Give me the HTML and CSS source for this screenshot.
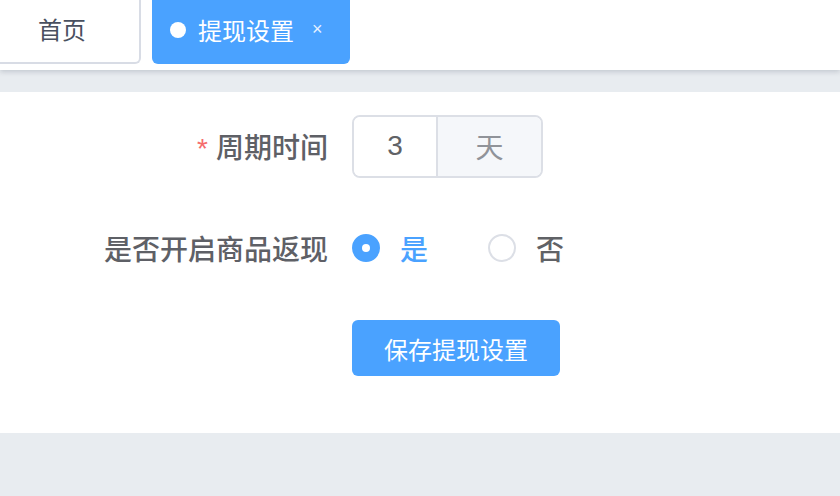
FILE: index.html
```html
<!DOCTYPE html>
<html>
<head>
<meta charset="utf-8">
<link rel="stylesheet" href="styles.css">
<title>提现设置</title>
</head>
<body>
  <div class="tags_view">
    <span class="tag_item tag_home">首页</span>
    <span class="tag_item tag_active"><i class="tag_dot"></i>提现设置<span class="tag_close">×</span></span>
  </div>

  <div class="app_main">
    <form class="set_form" action="">
      <div class="form_item item_period">
        <label class="form_label"><span class="required">*</span>周期时间</label>
        <div class="form_content">
          <div class="input_group">
            <input class="input_inner" type="text" value="3">
            <div class="input_append">天</div>
          </div>
        </div>
      </div>

      <div class="form_item item_radio">
        <label class="form_label">是否开启商品返现</label>
        <div class="form_content">
          <label class="radio radio_checked"><span class="radio_circle"></span><span class="radio_text">是</span></label>
          <label class="radio"><span class="radio_circle"></span><span class="radio_text">否</span></label>
        </div>
      </div>

      <div class="form_item item_button">
        <div class="form_label"></div>
        <div class="form_content">
          <button type="button" class="button_primary">保存提现设置</button>
        </div>
      </div>
    </form>
  </div>
</body>
</html>
```

FILE: styles.css
```css
body {
  margin: 0;
  background-color: #e8ecf0;
  font-family: "Liberation Sans", "Noto Sans CJK SC", sans-serif;
  color: #606266;
}

/* tab bar */
.tags_view {
  height: 70px;
  background-color: #fff;
  box-shadow: 0 2px 5px rgba(0, 21, 41, 0.16);
  display: flex;
  align-items: flex-start;
  gap: 11px;
}

.tag_item {
  box-sizing: border-box;
  height: 64px;
  padding-bottom: 5px;
  display: flex;
  align-items: center;
  font-size: 24px;
  border-radius: 0 0 6px 6px;
}

.tag_home {
  margin-left: -20px;
  padding-left: 56px;
  padding-right: 53px;
  border: 2px solid #d8dce5;
  border-top: none;
  color: #495060;
}

.tag_active {
  padding-left: 18px;
  padding-right: 22px;
  width: 198px;
  background-color: #4aa2ff;
  color: #fff;
}

.tag_dot {
  width: 16px;
  height: 16px;
  border-radius: 50%;
  background-color: #fff;
  margin-right: 12px;
}

.tag_close {
  font-size: 18px;
  margin-left: 18px;
  color: #e6f1ff;
}

/* content card */
.app_main {
  margin-top: 22px;
  background-color: #fff;
  height: 341px;
  box-sizing: border-box;
  padding-top: 22px;
}

.form_item {
  display: flex;
  align-items: center;
}

.item_period {
  height: 64px;
  margin-bottom: 44px;
}

.item_radio {
  height: 52px;
  margin-bottom: 46px;
}

.item_button {
  height: 56px;
}

.form_label {
  box-sizing: border-box;
  width: 352px;
  padding-right: 24px;
  text-align: right;
  font-size: 28px;
  font-weight: 500;
  color: #5e6066;
}

.required {
  color: #f56c6c;
  font-size: 28px;
  margin-right: 8px;
}

.form_content {
  display: flex;
  align-items: center;
}

/* input with append */
.input_group {
  display: flex;
  box-sizing: border-box;
  width: 191px;
  height: 63px;
  border: 2px solid #dcdfe6;
  border-radius: 8px;
  overflow: hidden;
}

.input_inner {
  width: 82px;
  border: none;
  outline: none;
  padding: 0;
  text-align: center;
  font-family: "Liberation Sans", sans-serif;
  font-size: 28px;
  color: #606266;
}

.input_append {
  flex: 1;
  display: flex;
  align-items: center;
  justify-content: center;
  border-left: 2px solid #dcdfe6;
  background-color: #f5f7fa;
  color: #909399;
  font-size: 28px;
}

/* radios */
.radio {
  display: flex;
  align-items: center;
  margin-right: 60px;
}

.radio_circle {
  box-sizing: border-box;
  width: 28px;
  height: 28px;
  border-radius: 50%;
  border: 2px solid #dcdfe6;
  display: flex;
  align-items: center;
  justify-content: center;
}

.radio_checked .radio_circle {
  border-color: #4aa2ff;
  background-color: #4aa2ff;
}

.radio_checked .radio_circle::after {
  content: "";
  width: 8px;
  height: 8px;
  border-radius: 50%;
  background-color: #fff;
}

.radio_text {
  padding-left: 20px;
  font-size: 28px;
  font-weight: 500;
  color: #606266;
}

.radio_checked .radio_text {
  color: #4aa2ff;
}

/* button */
.button_primary {
  height: 56px;
  width: 208px;
  border: none;
  border-radius: 6px;
  background-color: #4aa2ff;
  color: #fff;
  font-family: "Noto Sans CJK SC", sans-serif;
  font-size: 24px;
  padding: 0;
}
```
